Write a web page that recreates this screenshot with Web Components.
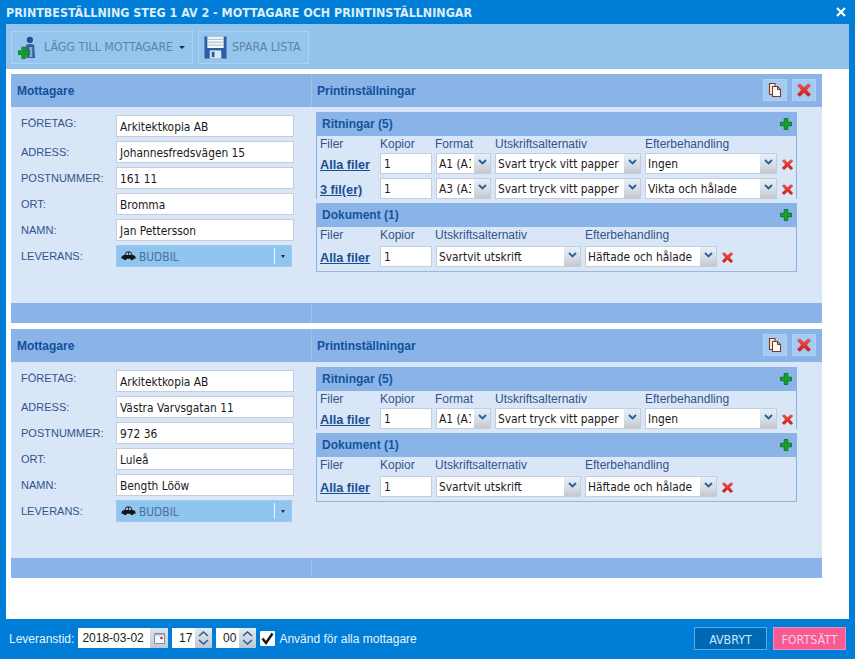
<!DOCTYPE html>
<html lang="sv"><head><meta charset="utf-8"><title>Printbeställning</title>
<style>
html,body{margin:0;padding:0;background:#007dd6}
body{font:12px "Liberation Sans",Arial,sans-serif}
</style></head><body>
<x-app>
  <x-titlebar slot="title">PRINTBESTÄLLNING STEG 1 AV 2 - MOTTAGARE OCH PRINTINSTÄLLNINGAR</x-titlebar>
  <x-toolbar slot="tools">
    <x-tool w="182" icon="adduser" caret>LÄGG TILL MOTTAGARE</x-tool>
    <x-tool w="111" icon="floppy">SPARA LISTA</x-tool>
  </x-toolbar>

  <x-card slot="main">
    <x-field label="FÖRETAG:">Arkitektkopia AB</x-field>
    <x-field label="ADRESS:">Johannesfredsvägen 15</x-field>
    <x-field label="POSTNUMMER:">161 11</x-field>
    <x-field label="ORT:">Bromma</x-field>
    <x-field label="NAMN:">Jan Pettersson</x-field>
    <x-field label="LEVERANS:" delivery>BUDBIL</x-field>
    <x-group slot="right" heading="Ritningar (5)" style="--cols:56px 52px 55px 146px 132px 12px">
      <x-heads><span>Filer</span><span>Kopior</span><span>Format</span><span>Utskriftsalternativ</span><span>Efterbehandling</span></x-heads>
      <x-row><x-flink>Alla filer</x-flink><x-box>1</x-box><x-select>A1 (A1)</x-select><x-select>Svart tryck vitt papper</x-select><x-select>Ingen</x-select><x-icon name="x" size="13"></x-icon></x-row>
      <x-row><x-flink>3 fil(er)</x-flink><x-box>1</x-box><x-select>A3 (A3)</x-select><x-select>Svart tryck vitt papper</x-select><x-select>Vikta och hålade</x-select><x-icon name="x" size="13"></x-icon></x-row>
    </x-group>
    <x-group slot="right" heading="Dokument (1)" style="--cols:56px 52px 145px 132px 12px">
      <x-heads tall><span>Filer</span><span>Kopior</span><span>Utskriftsalternativ</span><span>Efterbehandling</span></x-heads>
      <x-row><x-flink>Alla filer</x-flink><x-box>1</x-box><x-select>Svartvit utskrift</x-select><x-select>Häftade och hålade</x-select><x-icon name="x" size="13"></x-icon></x-row>
    </x-group>
  </x-card>

  <x-card slot="main">
    <x-field label="FÖRETAG:">Arkitektkopia AB</x-field>
    <x-field label="ADRESS:">Västra Varvsgatan 11</x-field>
    <x-field label="POSTNUMMER:">972 36</x-field>
    <x-field label="ORT:">Luleå</x-field>
    <x-field label="NAMN:">Bength Lööw</x-field>
    <x-field label="LEVERANS:" delivery>BUDBIL</x-field>
    <x-group slot="right" heading="Ritningar (5)" style="--cols:56px 52px 55px 146px 132px 12px">
      <x-heads><span>Filer</span><span>Kopior</span><span>Format</span><span>Utskriftsalternativ</span><span>Efterbehandling</span></x-heads>
      <x-row><x-flink>Alla filer</x-flink><x-box>1</x-box><x-select>A1 (A1)</x-select><x-select>Svart tryck vitt papper</x-select><x-select>Ingen</x-select><x-icon name="x" size="13"></x-icon></x-row>
    </x-group>
    <x-group slot="right" heading="Dokument (1)" style="--cols:56px 52px 145px 132px 12px">
      <x-heads tall><span>Filer</span><span>Kopior</span><span>Utskriftsalternativ</span><span>Efterbehandling</span></x-heads>
      <x-row><x-flink>Alla filer</x-flink><x-box>1</x-box><x-select>Svartvit utskrift</x-select><x-select>Häftade och hålade</x-select><x-icon name="x" size="13"></x-icon></x-row>
    </x-group>
  </x-card>

  <x-footer slot="footer">
    <span slot="lead">Leveranstid:</span>
    <x-date slot="lead">2018-03-02</x-date>
    <x-spin slot="lead">17</x-spin>
    <x-spin slot="lead">00</x-spin>
    <x-check slot="lead">Använd för alla mottagare</x-check>
    <x-action slot="end">AVBRYT</x-action>
    <x-action slot="end" pink>FORTSÄTT</x-action>
  </x-footer>
</x-app>
<script>
const UI='"DejaVu Sans Condensed","DejaVu Sans",sans-serif';
const ICONS={
 x:`<svg viewBox="0 0 16 16"><defs><linearGradient id="r" x1="0" y1="0" x2="0" y2="1"><stop offset="0" stop-color="#f4554c"/><stop offset="1" stop-color="#cf1712"/></linearGradient></defs><path d="M1.500 3.500 4 1.800 8 5.400 12.300 1.800 14.700 3.600 10.600 8 14.700 12.600 12.200 14.400 8 10.600 3.800 14.400 1.300 12.400 5.400 8Z" fill="url(#r)" stroke="#b92a26" stroke-width=".4"/></svg>`,
 plus:`<svg viewBox="0 0 12 12"><path d="M4.200.5h3.600v3.700h3.700v3.600H7.800v3.700H4.200V7.800H.5V4.200h3.700z" fill="#16a32c" stroke="#0b6b1c" stroke-width=".8"/></svg>`,
 copy:`<svg viewBox="0 0 16 16"><path d="M2.500 1.500h5.500v11h-5.500z" fill="#f6eee6" stroke="#7b3d1d" stroke-width="1.100"/><path d="M5.500 4.500h5l3 3v7h-8z" fill="#fff" stroke="#7b3d1d" stroke-width="1.100"/><path d="M10.500 4.500v3h3" fill="none" stroke="#7b3d1d"/></svg>`,
 adduser:`<svg viewBox="0 0 20 24"><circle cx="12.500" cy="4" r="3.300" fill="#2c4f8a"/><path d="M8.500 9q4-1.500 8.500 0L18 23H9z" fill="#37609e"/><path d="M12 11.500h3V22h-3z" fill="#8aa8cf"/><path d="M4 11.500h4V15.500h4v4H8v4H4v-4H0v-4h4z" fill="#12a02a" stroke="#0b6d1c" stroke-width=".7"/></svg>`,
 floppy:`<svg viewBox="0 0 24 24"><path d="M.5.500h23v23H.5z" fill="#2a5fa8"/><path d="M3.500.5h17v12h-17z" fill="#f4f7fb"/><path d="M3.500 3.500h17M3.500 6.500h17M3.500 9.500h17" stroke="#a8b6c8"/><path d="M6 15h12v8.500H6z" fill="#dfe6ef"/><path d="M8 16.500h3v5.500H8z" fill="#2a5fa8"/></svg>`,
 car:`<svg viewBox="0 0 16 10"><path d="M.5 6.500q0-1.500 1.500-2L3.800 4 5 1.300Q5.500.3 6.500.3h3q1 0 1.500 1L12.300 4l1.800.5q1.400.5 1.400 2V8h-2a1.900 1.900 0 0 1-3.700 0H6.200a1.900 1.900 0 0 1-3.700 0H.5z" fill="#14161c"/><path d="M6 1.300h1.600V4H4.800zM8.400 1.300H10L11.200 4H8.400z" fill="#8fc5ee"/></svg>`
};
function def(name,css,html,init){
  const t=document.createElement('template');
  t.innerHTML=`<style>${css}</style>${html}`;
  customElements.define(name,class extends HTMLElement{
    constructor(){super();this.attachShadow({mode:'open'}).appendChild(t.content.cloneNode(true));}
    connectedCallback(){if(init)init(this,this.shadowRoot);}
  });
}
def('x-icon',':host{display:inline-flex;align-items:center;justify-content:center;flex:none}svg{display:block;width:100%;height:100%}','<span id="g" style="display:contents"></span>',(h,s)=>{
  const z=h.getAttribute('size')||16;h.style.width=(h.getAttribute('w')||z)+'px';h.style.height=(h.getAttribute('h')||z)+'px';
  if(h.parentElement&&h.parentElement.localName==='x-row')h.style.marginTop='2px';
  s.getElementById('g').innerHTML=ICONS[h.getAttribute('name')];
});
def('x-app',`:host{display:grid;grid-template-rows:24px 595px 40px;width:855px;height:659px;overflow:hidden;background:#007dd6}
  main{margin:0 6px;background:#fff;display:flex;flex-direction:column;min-height:0}
  .cards{display:flex;flex-direction:column;gap:6px;padding:5px 27px 0 5px}`,
  `<slot name="title"></slot><main><slot name="tools"></slot><div class="cards"><slot name="main"></slot></div></main><slot name="footer"></slot>`);
def('x-titlebar',`:host{display:flex;align-items:center;justify-content:space-between;padding:0 9px 0 6px;color:#dcedfb;font:bold 12.400px ${UI};white-space:nowrap}
  svg{width:10px;height:10px;display:block}`,
  `<slot></slot><svg viewBox="0 0 10 10"><path d="M1 1l8 8M9 1l-8 8" stroke="#fff" stroke-width="2.200"/></svg>`);
def('x-toolbar',`:host{display:flex;gap:5px;align-items:center;height:45px;box-sizing:border-box;background:#94c3ec;padding:1px 0 0 5px}`,`<slot></slot>`);
def('x-tool',`:host{display:flex;align-items:center;height:33px;box-sizing:border-box;background:#96c5ee;border:1px solid #a9d3f4;color:#5f82a8;font:12.300px ${UI};white-space:nowrap}
  #i{display:flex}.c{margin-left:6px;width:0;height:0;border:3px solid transparent;border-top-color:#1c2a3a;border-bottom:0}`,
  `<span id="i"></span><span class="t"><slot></slot></span><span class="c"></span>`,(h,s)=>{
   h.style.width=h.getAttribute('w')+'px';
   const n=h.getAttribute('icon');const fl=n==='floppy';
   h.style.paddingLeft=(fl?5:6)+'px';
   s.querySelector('.t').style.marginLeft=(fl?5:7)+'px';
   s.getElementById('i').innerHTML=`<x-icon name="${n}" size="23" w="${fl?23:19}"></x-icon>`;
   if(!h.hasAttribute('caret'))s.querySelector('.c').style.display='none';
  });
def('x-card',`:host{display:grid;grid-template-columns:301px 1fr;grid-template-rows:33px 196px 20px;background:#d9e6f7;color:#123}
  .h{background:#8ab4e8;display:flex;align-items:center;justify-content:space-between;font:bold 12px "Liberation Sans",sans-serif;color:#10509c;padding:0 6px;min-width:0}
  .h.r{padding-left:5px}
  .h.l{border-right:1px solid #9cc0ec}
  .acts{display:flex;gap:5px;margin-top:-1px}
  .act{width:24px;height:22px;box-sizing:border-box;background:#a5cbf2;border:1px solid #add3f4;display:flex;align-items:center;justify-content:center}
  .lf{padding:8px 0 0 10px}
  .rt{padding:5px 25px 0 4px}
  .f{background:#8ab4e8}.f.l{border-right:1px solid #9cc0ec}`,
  `<div class="h l">Mottagare</div>
   <div class="h r"><span>Printinställningar</span><span class="acts"><span class="act"><x-icon name="copy" size="16"></x-icon></span><span class="act"><x-icon name="x" size="16"></x-icon></span></span></div>
   <div class="lf"><slot></slot></div><div class="rt"><slot name="right"></slot></div>
   <div class="f l"></div><div class="f"></div>`);
def('x-field',`:host{display:grid;grid-template-columns:95px 178px;height:26px;color:#33548a;font:11px "Liberation Sans",sans-serif}
  .l{line-height:14px;padding-top:4px}:host(:first-child) .l{padding-top:1px}.v{display:flex}`,
  `<span class="l"></span><div class="v"></div>`,(h,s)=>{
   s.querySelector('.l').textContent=h.getAttribute('label');
   const v=s.querySelector('.v');
   v.innerHTML=h.hasAttribute('delivery')?'<x-delivery><slot></slot></x-delivery>':'<x-box style="width:178px;height:22px"><slot></slot></x-box>';
  });
def('x-box',`:host{display:flex;align-items:center;box-sizing:border-box;height:21px;background:#fff;border:1px solid #c4cdd9;padding:1px 3px 0;color:#1a1a1a;font:11.850px ${UI};white-space:nowrap;overflow:hidden;min-width:0}`,`<slot></slot>`);
def('x-delivery',`:host{display:flex;align-items:center;box-sizing:border-box;width:176px;height:22px;background:#8fc5ee;border:1px solid #98cbf0;color:#4c6f9b;font:11.850px ${UI};padding-left:4px}
  .t{margin-left:3px;flex:1;padding-top:2px}.s{width:1px;height:16px;background:#eaf5fd;margin-right:6px}.c{width:0;height:0;border:2.500px solid transparent;border-top:3px solid #1c2a3a;border-bottom:0;margin-right:6px}`,
  `<x-icon name="car" size="15" h="10"></x-icon><span class="t"><slot></slot></span><span class="s"></span><span class="c"></span>`);
def('x-group',`:host{display:block;width:481px;box-sizing:border-box;border:1px solid #8ab4e8;border-width:0 1px}
  :host(:last-child){border-bottom-width:1px;border-bottom-color:#9bb7d8}
  .h{height:24px;margin:0 -1px;background:#8ab4e8;display:flex;align-items:center;justify-content:space-between;padding:0 5px 0 6px;font:bold 12px "Liberation Sans",sans-serif;color:#15559c}
  .b{padding:0 0 0 3px}`,
  `<div class="h"><span id="t"></span><x-icon name="plus" size="12"></x-icon></div><div class="b"><slot></slot></div>`,(h,s)=>{s.getElementById('t').textContent=h.getAttribute('heading');});
def('x-heads',`:host{display:grid;grid-template-columns:var(--cols);column-gap:4px;height:17px;align-items:start;color:#33548a;font:12px/16px "Liberation Sans",sans-serif;white-space:nowrap}
  :host([tall]){height:19px;line-height:17px}
  ::slotted(span){display:block}
  ::slotted(span:nth-child(3)){margin-left:-1px}`,`<slot></slot>`);
def('x-row',`:host{display:grid;grid-template-columns:var(--cols);column-gap:4px;height:21px;margin-bottom:4px;align-items:center}`,`<slot></slot>`);
def('x-flink',`:host{display:block;color:#1b4f91;font:bold 12.700px "Liberation Sans",sans-serif;text-decoration:underline;white-space:nowrap;padding-top:3px}`,`<slot></slot>`);
def('x-select',`:host{display:flex;height:21px;box-sizing:border-box;background:#fff;border:1px solid #c4cdd9;color:#1a1a1a;font:11.850px ${UI};min-width:0}
  .t{flex:1;min-width:0;overflow:hidden;white-space:nowrap;padding:1px 0 0 2px;margin-right:3px;line-height:19px}
  .a{flex:none;width:16px;background:linear-gradient(#e6eef8,#d7e0ea 50%,#c6c9cc);display:flex;align-items:flex-start;justify-content:center;padding-top:5px;box-sizing:border-box}
  svg{width:9px;height:6px;display:block}`,
  `<span class="t"><slot></slot></span><span class="a"><svg viewBox="0 0 9 6"><path d="M1 1l3.500 3.500L8 1" fill="none" stroke="#2a5d96" stroke-width="1.800"/></svg></span>`);
def('x-footer',`:host{display:flex;align-items:flex-start;justify-content:space-between;padding:8px 9px 0 9px;color:#e8f3fc;font:12px "Liberation Sans",sans-serif}
  .a,.b{display:flex;align-items:center}.a{gap:4px;margin-top:1px}.b{gap:6px}
  ::slotted(span){padding-top:2px}`,
  `<div class="a"><slot name="lead"></slot></div><div class="b"><slot name="end"></slot></div>`);
def('x-date',`:host{display:flex;width:90px;height:20px;background:#fff;color:#1a1a1a;font:12px "Liberation Sans",sans-serif}
  .t{flex:1;line-height:21px;padding-left:4px}.c{width:18px;background:linear-gradient(#dbe5f0,#bfc9d4);display:flex;align-items:center;justify-content:center}
  svg{width:11px;height:11px}`,
  `<span class="t"><slot></slot></span><span class="c"><svg viewBox="0 0 11 11"><path d="M.5.500h10v10H.5z" fill="#f3f5f8" stroke="#7f8fa3"/><path d="M1 1h9v1.500H1z" fill="#a8b8cc"/><circle cx="7.500" cy="5" r="1.300" fill="#b8202a"/></svg></span>`);
def('x-spin',`:host{display:flex;width:40px;height:20px;background:#fff;color:#1a1a1a;font:12px "Liberation Sans",sans-serif}
  .t{flex:1;line-height:21px;text-align:right;padding-right:3px}.c{width:17px;background:linear-gradient(#e3ebf4,#bcc6d2);display:flex;flex-direction:column;align-items:center;justify-content:space-around;padding:2px 0;box-sizing:border-box}
  svg{width:11px;height:6px;display:block}`,
  `<span class="t"><slot></slot></span><span class="c"><svg viewBox="0 0 11 6"><path d="M1 5l4.500-4L10 5" fill="none" stroke="#2a5d96" stroke-width="1.600"/></svg><svg viewBox="0 0 11 6"><path d="M1 1l4.500 4L10 1" fill="none" stroke="#2a5d96" stroke-width="1.600"/></svg></span>`);
def('x-check',`:host{display:flex;align-items:center;gap:4px;color:#e8f3fc;font:12px "Liberation Sans",sans-serif;white-space:nowrap}
  .b{width:15px;height:15px;background:#fff;display:flex;align-items:center;justify-content:center;border-radius:1px}
  .x{padding-top:2px}
  svg{width:13px;height:13px}`,
  `<span class="b"><svg viewBox="0 0 13 13"><path d="M1.500 6.500l3.500 4.500L11.500 1.500" fill="none" stroke="#141414" stroke-width="2.400"/></svg></span><span class="x"><slot></slot></span>`);
def('x-action',`:host{display:flex;align-items:center;justify-content:center;width:73px;height:23px;box-sizing:border-box;background:#0069b4;border:1px solid #57ace8;color:#cfe8fa;font:12.400px ${UI};padding-top:1px}
  :host([pink]){background:#f85a93;border-color:#f78cb6;color:#fbd0e0}`,`<slot></slot>`);
</script>
</body></html>
